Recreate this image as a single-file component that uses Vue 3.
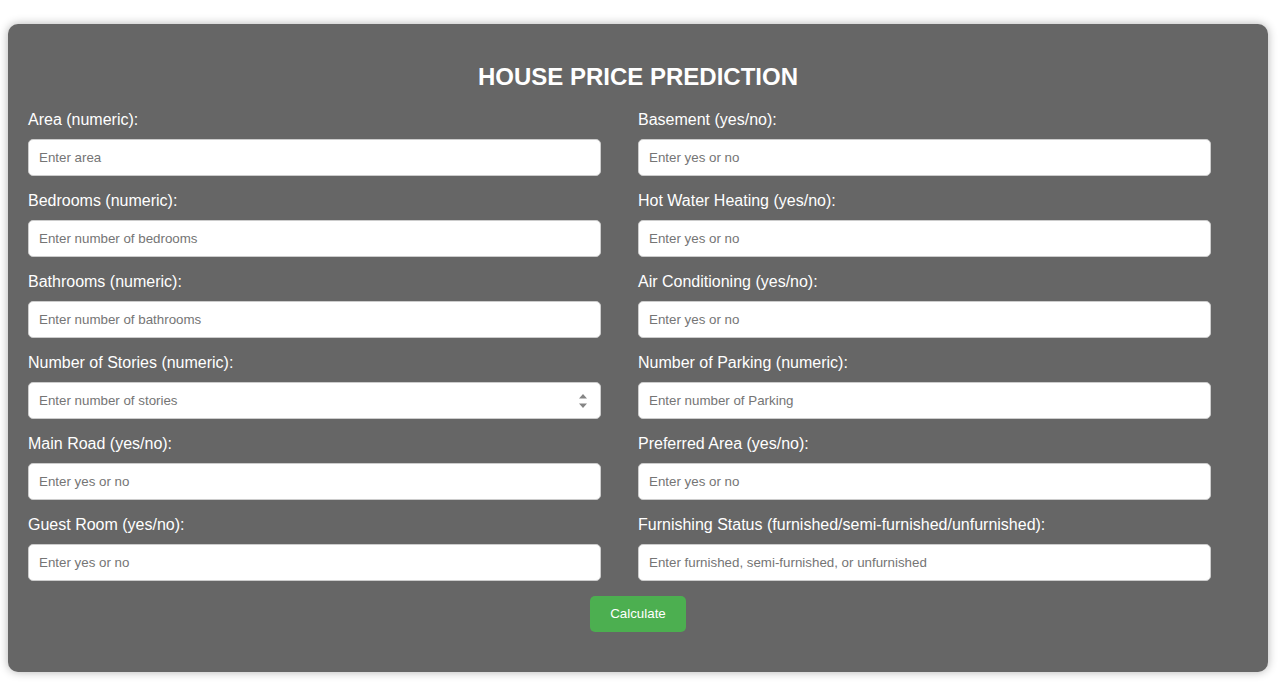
<script setup>
import { reactive } from 'vue'

const yesNo = 'Enter yes or no'
const columns = [
  [
    { id: 'area', label: 'Area (numeric):', hint: 'Enter area', type: 'number' },
    { id: 'bedrooms', label: 'Bedrooms (numeric):', hint: 'Enter number of bedrooms', type: 'number' },
    { id: 'bathrooms', label: 'Bathrooms (numeric):', hint: 'Enter number of bathrooms', type: 'number' },
    { id: 'stories', label: 'Number of Stories (numeric):', hint: 'Enter number of stories', type: 'number', stepper: true },
    { id: 'mainroad', label: 'Main Road (yes/no):', hint: yesNo, type: 'text' },
    { id: 'guestroom', label: 'Guest Room (yes/no):', hint: yesNo, type: 'text' },
  ],
  [
    { id: 'basement', label: 'Basement (yes/no):', hint: yesNo, type: 'text' },
    { id: 'hotwater', label: 'Hot Water Heating (yes/no):', hint: yesNo, type: 'text' },
    { id: 'aircon', label: 'Air Conditioning (yes/no):', hint: yesNo, type: 'text' },
    { id: 'parking', label: 'Number of Parking (numeric):', hint: 'Enter number of Parking', type: 'number' },
    { id: 'prefarea', label: 'Preferred Area (yes/no):', hint: yesNo, type: 'text' },
    {
      id: 'furnishing',
      label: 'Furnishing Status (furnished/semi-furnished/unfurnished):',
      hint: 'Enter furnished, semi-furnished, or unfurnished',
      type: 'text',
    },
  ],
]
const values = reactive({})
</script>

<template>
  <main class="card">
    <h1 class="title">HOUSE PRICE PREDICTION</h1>
    <form @submit.prevent>
      <div class="columns">
        <div v-for="(fields, i) in columns" :key="i" class="column">
          <div v-for="f in fields" :key="f.id" class="field">
            <label :for="f.id">{{ f.label }}</label>
            <div class="control">
              <input :id="f.id" v-model="values[f.id]" :type="f.type" :placeholder="f.hint" />
              <svg v-if="f.stepper" class="stepper" viewBox="0 0 10 14" aria-hidden="true">
                <path d="M5 0 9 4.5H1zM5 14 9 9.5H1z" />
              </svg>
            </div>
          </div>
        </div>
      </div>
      <button type="submit" class="submit">Calculate</button>
    </form>
  </main>
</template>

<style>
body {
  background: #fff;
}
</style>

<style scoped>
.card {
  margin: 24px 12px 16px 8px;
  padding: 37px 20px 40px;
  border-radius: 10px;
  background: #666;
  box-shadow: 0 0 10px rgba(0, 0, 0, 0.3);
  color: #fff;
  font-family: "Liberation Sans", Arial, sans-serif;
}
.title {
  margin: 0 0 17px;
  font-size: 24px;
  line-height: 32px;
  text-align: center;
}
.columns {
  display: grid;
  grid-template-columns: 1fr 1fr;
}
.column {
  display: grid;
  gap: 15px;
}
label {
  display: block;
  margin-bottom: 9px;
  font-size: 16px;
  line-height: 20px;
}
.control {
  position: relative;
  width: 94%;
}
input {
  display: block;
  box-sizing: border-box;
  width: 100%;
  height: 37px;
  padding: 0 10px;
  border: 1px solid #ccc;
  border-radius: 5px;
  background: #fff;
  color: #222;
  font-family: inherit;
  appearance: textfield;
}
input::placeholder {
  color: #757575;
}
.stepper {
  position: absolute;
  top: 12px;
  right: 13px;
  width: 10px;
  height: 14px;
  fill: #858585;
  pointer-events: none;
}
.submit {
  display: block;
  margin: 15px auto 0;
  padding: 10px 20px;
  border: 0;
  border-radius: 5px;
  background: #4caf50;
  color: #fff;
  font-family: inherit;
  line-height: 16px;
}
</style>
